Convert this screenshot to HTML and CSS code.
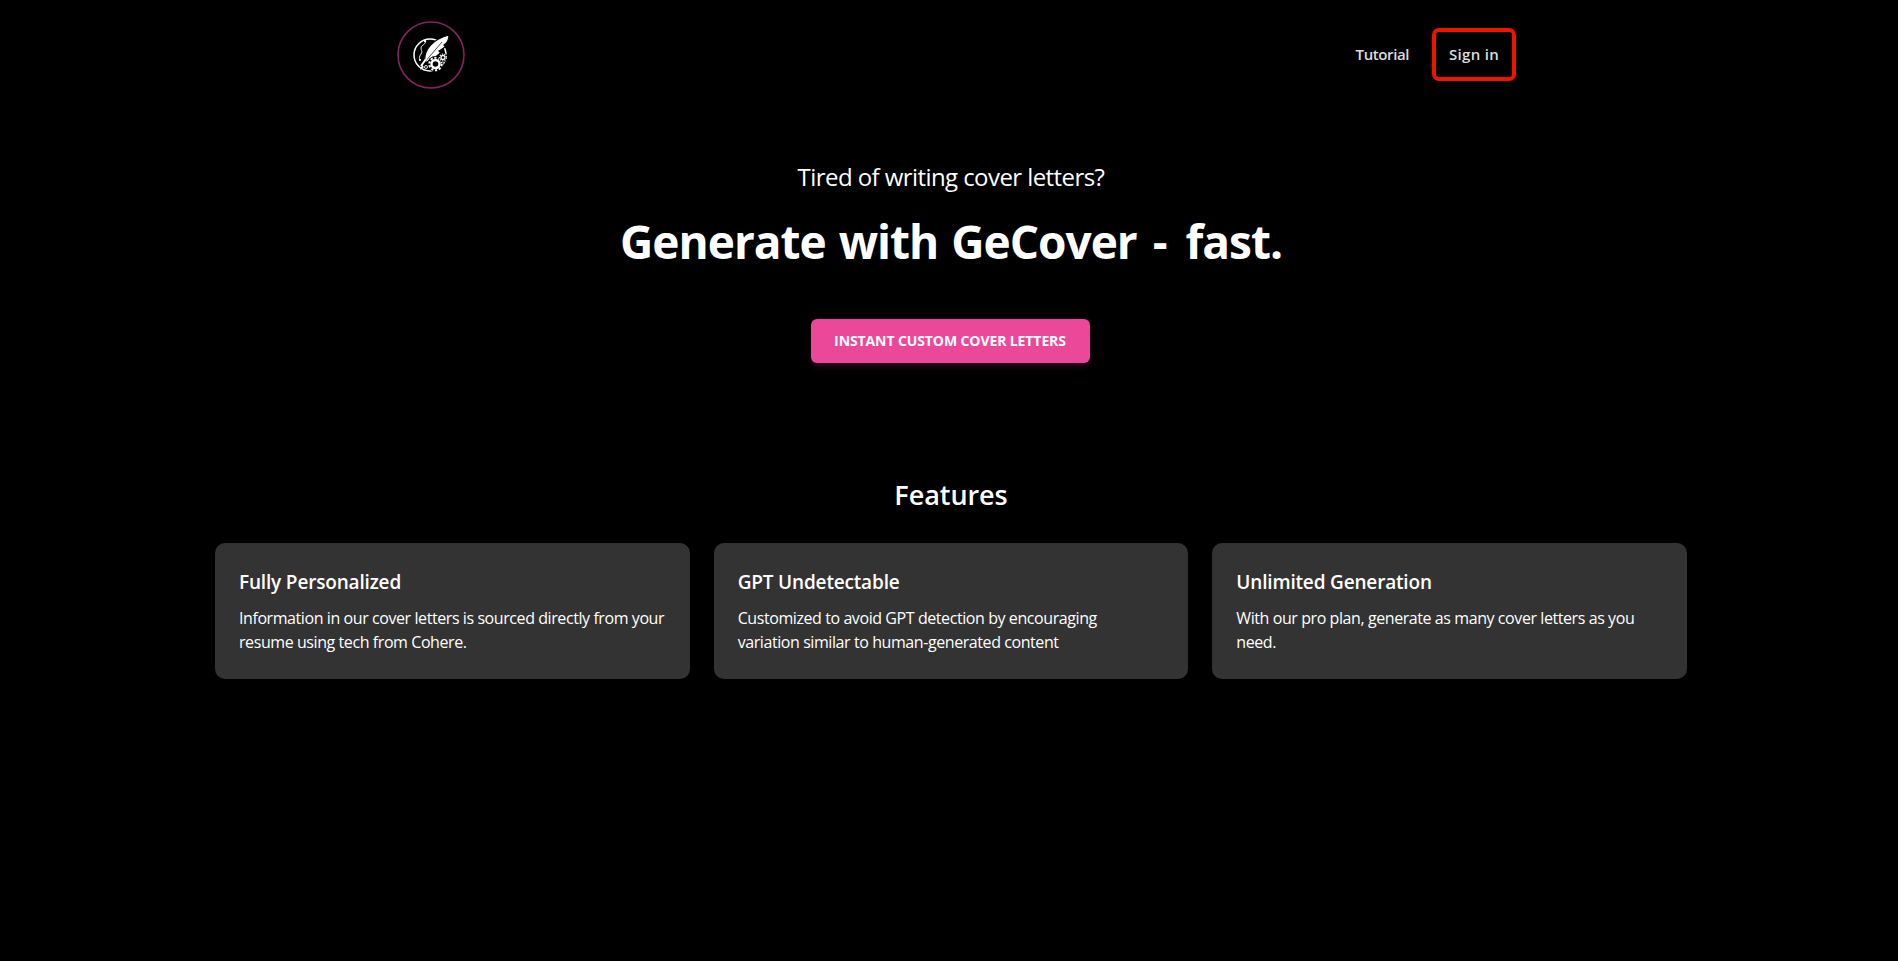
FILE: index.html
```html
<!DOCTYPE html>
<html lang="en">
<head>
    <meta charset="UTF-8">
    <meta name="viewport" content="width=device-width, initial-scale=1.0">
    <title>GeCover</title>
    <link rel="stylesheet" href="styles.css">
</head>

<body>

    <nav class="navbar">
        <a class="logo" href="#">
            <svg width="68" height="68" viewBox="0 0 68 68">
                <circle cx="34" cy="34" r="33" fill="none" stroke="#85245a" stroke-width="1.6"/>
                <!-- ring behind the quill -->
                <circle cx="33" cy="34" r="16" fill="none" stroke="#fff" stroke-width="1.5"/>
                <!-- squiggle -->
                <path d="M28 20c2 3-4 4-4 7s2 3 0 6-2 4-1 6" stroke="#fff" stroke-width="0.9" fill="none"/>
                <circle cx="28" cy="20" r="1.200" fill="#fff"/>
                <circle cx="23" cy="39" r="1.100" fill="#fff"/>
                <!-- quill -->
                <path d="M28 41C26 28 37 18 52 14C52 19 50 22 47 24L48.500 25.500C46 28 44 29 42 30L43.500 31.500C40 36 34 38 30 41Z" fill="#fff" stroke="#000" stroke-width="1.200"/>
                <path d="M45 21L27 42" stroke="#000" stroke-width="0.7" fill="none"/>
                <path d="M29 38L24 45" stroke="#fff" stroke-width="2" fill="none"/>
                <path d="M25 44l-2 5 4-3z" fill="#fff"/>
                <!-- gears -->
                <circle cx="38.500" cy="43" r="8" fill="#000"/>
                <circle cx="38.500" cy="43" r="4" fill="none" stroke="#fff" stroke-width="2.400"/>
                <circle cx="38.500" cy="43" r="6.200" fill="none" stroke="#fff" stroke-width="2" stroke-dasharray="2.200 1.700"/>
                <circle cx="46" cy="36.500" r="4.500" fill="#000"/>
                <circle cx="46" cy="36.500" r="2" fill="none" stroke="#fff" stroke-width="1.300"/>
                <circle cx="46" cy="36.500" r="3.400" fill="none" stroke="#fff" stroke-width="1.100" stroke-dasharray="1.300 1.100"/>
                <circle cx="29" cy="46" r="1.500" fill="none" stroke="#fff" stroke-width="0.9"/>
            </svg>
        </a>
        <div class="nav-links">
            <a class="nav-link" href="#">Tutorial</a>
            <a class="nav-link nav-signin" href="#">Sign in</a>
        </div>
    </nav>

    <section class="hero">
        <p class="hero-sub">Tired of writing cover letters?</p>
        <h1 class="hero-title">Generate with GeCover <span class="hero-dash">-</span> fast.</h1>
        <a class="cta" href="#">INSTANT CUSTOM COVER LETTERS</a>
    </section>

    <section class="features">
        <h2 class="features-title">Features</h2>
        <div class="feature-grid">
            <div class="card">
                <h3>Fully Personalized</h3>
                <p>Information in our cover letters is sourced directly from your resume using tech from Cohere.</p>
            </div>
            <div class="card">
                <h3>GPT Undetectable</h3>
                <p>Customized to avoid GPT detection by encouraging<br>variation similar to human-generated content</p>
            </div>
            <div class="card">
                <h3>Unlimited Generation</h3>
                <p>With our pro plan, generate as many cover letters as you need.</p>
            </div>
        </div>
    </section>

</body>
</html>
```

FILE: styles.css
```css
body {
    margin: 0;
    padding-left: 4px;
    height: 961px;
    overflow: hidden;
    background: #000;
    color: #fff;
    font-family: "Open Sans", "Noto Sans", sans-serif;
}
a {
    text-decoration: none;
    color: inherit;
}
.navbar {
    width: 1120px;
    margin-left: 393px;
    padding-top: 21px;
    display: flex;
    justify-content: space-between;
    align-items: center;
}
.logo {
    display: block;
    height: 68px;
}
.nav-links {
    display: flex;
    align-items: center;
    gap: 7px;
    margin-bottom: 2px;
}
.nav-link {
    color: #dcdcdc;
    font-size: 15px;
    font-weight: 600;
    letter-spacing: -0.4px;
    padding: 0 16px;
}
.nav-signin {
    box-sizing: border-box;
    height: 53px;
    line-height: 45px;
    border: 4px solid #f01400;
    border-radius: 7px;
    padding: 0 13px;
    margin-right: 1px;
    letter-spacing: 0.3px;
}
.hero {
    margin-top: 72px;
    text-align: center;
}
.hero-sub {
    margin: 0;
    font-size: 24px;
    line-height: 32px;
    letter-spacing: -0.57px;
}
.hero-title {
    margin: 17px 0 0;
    font-size: 46px;
    line-height: 62px;
    font-weight: 700;
    letter-spacing: -1px;
    word-spacing: 2px;
}
.hero-dash {
    margin: 0 6px 0 3px;
}
.cta {
    display: inline-block;
    margin-top: 47px;
    margin-right: 2px;
    width: 279px;
    height: 44px;
    line-height: 43px;
    background: #ec4899;
    border-radius: 6px;
    font-size: 14px;
    font-weight: 700;
    letter-spacing: -0.1px;
    box-shadow: 0 4px 6px -1px rgba(236, 72, 153, 0.2);
}
.features {
    margin-top: 114px;
}
.features-title {
    margin: 0;
    text-align: center;
    font-size: 27px;
    line-height: 36px;
    font-weight: 600;
    letter-spacing: -0.05px;
}
.feature-grid {
    width: 1472px;
    margin: 30px auto 0;
    display: grid;
    grid-template-columns: repeat(3, 1fr);
    gap: 24px;
}
.card {
    box-sizing: border-box;
    height: 136px;
    padding: 25px 24px 24px;
    background: #333;
    border-radius: 10px;
}
.card h3 {
    margin: 0;
    font-size: 19px;
    line-height: 28px;
    font-weight: 600;
    letter-spacing: -0.17px;
}
.card p {
    margin: 10px 0 0;
    font-size: 16px;
    line-height: 24px;
    letter-spacing: -0.42px;
}
```
